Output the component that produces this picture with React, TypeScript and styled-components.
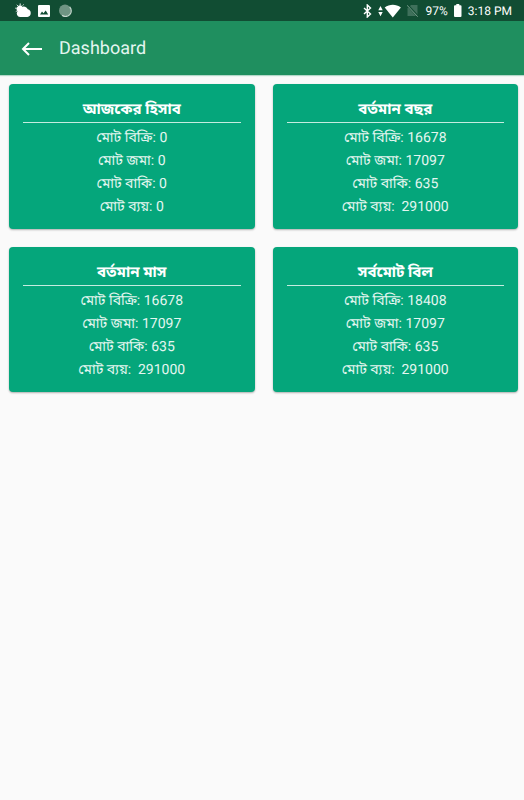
import styled, { createGlobalStyle } from "styled-components";

const GlobalStyle = createGlobalStyle`
  * {
    box-sizing: border-box;
  }

  body {
    margin: 0;
    background: #fafafa;
    font-family: Roboto, "Noto Sans Bengali", "Noto Sans", sans-serif;
    text-rendering: geometricPrecision;
  }
`;

const StatusBar = styled.div`
  display: flex;
  align-items: center;
  justify-content: space-between;
  height: 21px;
  padding: 0 12px 0 15px;
  background: #114d33;
  color: white;
  font-size: 12px;
  line-height: 22px;
`;

const StatusGroup = styled.div<{ $gap: number }>`
  display: flex;
  align-items: center;
  gap: ${({ $gap }) => $gap}px;

  svg {
    display: block;
  }
`;

const Toolbar = styled.header`
  display: flex;
  align-items: center;
  gap: 16px;
  height: 54px;
  padding: 2px 21px 0;
  background: #1f8f5f;
  box-shadow: 0 1px 1px #b4d8c9;
  color: white;
`;

const BackButton = styled.button`
  display: flex;
  padding: 0;
  border: 0;
  background: none;
  color: inherit;
  cursor: pointer;
`;

const PageTitle = styled.h1`
  margin: 0;
  color: #e4f6f0;
  font-size: 18px;
  font-weight: 400;
  line-height: 24px;
`;

const CardGrid = styled.main`
  display: grid;
  grid-template-columns: 1fr 1fr;
  gap: 18px;
  padding: 9px 6px 9px 9px;
`;

const Card = styled.section`
  padding: 15px 14px 10px;
  border-radius: 4px;
  background: #05a67b;
  box-shadow: 0 1px 2px rgba(0, 0, 0, 0.3);
  color: white;
  text-align: center;
`;

const CardTitle = styled.h2`
  margin: 0 0 4px;
  padding-bottom: 3px;
  border-bottom: 1px solid #c5ece0;
  font-size: 15px;
  font-weight: 700;
  line-height: 20px;
`;

const CardList = styled.ul`
  margin: 0;
  padding: 0;
  list-style: none;
`;

const CardRow = styled.li`
  color: #e4f6f0;
  font-size: 14px;
  line-height: 23px;
  white-space: pre;
`;

type Summary = {
  title: string;
  rows: string[];
};

const summaries: Summary[] = [
  {
    title: "আজকের হিসাব",
    rows: ["মোট বিক্রি: 0", "মোট জমা: 0", "মোট বাকি: 0", "মোট ব্যয়: 0"],
  },
  {
    title: "বর্তমান বছর",
    rows: ["মোট বিক্রি: 16678", "মোট জমা: 17097", "মোট বাকি: 635", "মোট ব্যয়:  291000"],
  },
  {
    title: "বর্তমান মাস",
    rows: ["মোট বিক্রি: 16678", "মোট জমা: 17097", "মোট বাকি: 635", "মোট ব্যয়:  291000"],
  },
  {
    title: "সর্বমোট বিল",
    rows: ["মোট বিক্রি: 18408", "মোট জমা: 17097", "মোট বাকি: 635", "মোট ব্যয়:  291000"],
  },
];

function WeatherIcon() {
  return (
    <svg width="16" height="15" viewBox="0 0 16 15" fill="white">
      <path d="M5 14a3.4 3.4 0 0 1-2.600-5.400A3.800 3.800 0 0 1 6.400 4a4.500 4.500 0 0 1 6.400 2.200A4 4 0 0 1 12.400 14z" />
      <path d="M2.300 8a3.500 3.500 0 0 1 5-4.800L4 7.500z" />
      <path
        d="M5.200.5v1.400M1.800 1.800l1 1M.3 5.200h1.300M8.500 1.500l-.8 1M.8 8.600l1-.6"
        stroke="white"
        strokeWidth="1"
        fill="none"
      />
    </svg>
  );
}

function PictureIcon() {
  return (
    <svg width="12" height="12" viewBox="0 0 12 12">
      <rect width="12" height="12" rx="1" fill="white" />
      <path d="M2 9.500 4 6.500l1.500 1.800L7.700 5.500 10.200 9.500z" fill="#114d33" />
    </svg>
  );
}

function SyncIcon() {
  return (
    <svg width="15" height="13" viewBox="0 0 15 13" fill="none">
      <circle cx="8" cy="6.500" r="6" fill="#6f9583" />
      <path d="M12.700 3a5.600 5.600 0 0 1-7.600 8.200" stroke="#c7d8cf" strokeWidth="1.200" />
    </svg>
  );
}

function BluetoothIcon() {
  return (
    <svg width="9" height="14" viewBox="0 0 9 14" fill="none">
      <path d="M1 4l6.500 6L4.300 13V1l3.200 3L1 10" stroke="white" strokeWidth="1.400" />
    </svg>
  );
}

function WifiIcon() {
  return (
    <svg width="23" height="14" viewBox="0 0 23 14" fill="white">
      <path d="M2.500 2 4.700 6.200H.3zM2.500 12.200.3 8h4.400z" />
      <path d="M14.800 13.500 6.700 3.400C11.500 0 18.100 0 22.900 3.400z" />
    </svg>
  );
}

function NoSimIcon() {
  return (
    <svg width="13" height="13" viewBox="0 0 13 13" fill="none">
      <path d="M4 1h6.500v11H.5V4.500z" fill="#3f705b" />
      <path d="M0 .5 11 12.500" stroke="#114d33" strokeWidth="2.200" />
      <path d="M0 1.200 10.700 12.700" stroke="#7d9f8f" strokeWidth="1" />
    </svg>
  );
}

function BatteryIcon() {
  return (
    <svg width="8" height="13" viewBox="0 0 8 13" fill="white">
      <path d="M2.300 0h3v1.300h1.200q1 0 1 1V12q0 1-1 1H1q-1 0-1-1V2.300q0-1 1-1h1.300z" />
    </svg>
  );
}

function BackIcon() {
  return (
    <svg width="22" height="14" viewBox="0 0 22 14" fill="none" stroke="white" strokeWidth="2">
      <path d="M21 7H2M8 1 2 7l6 6" />
    </svg>
  );
}

function SummaryCard({ summary }: { summary: Summary }) {
  return (
    <Card>
      <CardTitle>{summary.title}</CardTitle>
      <CardList>
        {summary.rows.map((row) => (
          <CardRow key={row}>{row}</CardRow>
        ))}
      </CardList>
    </Card>
  );
}

export default function App() {
  return (
    <>
      <GlobalStyle />
      <StatusBar>
        <StatusGroup $gap={7}>
          <WeatherIcon />
          <PictureIcon />
          <SyncIcon />
        </StatusGroup>
        <StatusGroup $gap={6}>
          <BluetoothIcon />
          <WifiIcon />
          <NoSimIcon />
          <span>97%</span>
          <BatteryIcon />
          <span>3:18 PM</span>
        </StatusGroup>
      </StatusBar>
      <Toolbar>
        <BackButton type="button" aria-label="Back">
          <BackIcon />
        </BackButton>
        <PageTitle>Dashboard</PageTitle>
      </Toolbar>
      <CardGrid>
        {summaries.map((summary) => (
          <SummaryCard key={summary.title} summary={summary} />
        ))}
      </CardGrid>
    </>
  );
}
